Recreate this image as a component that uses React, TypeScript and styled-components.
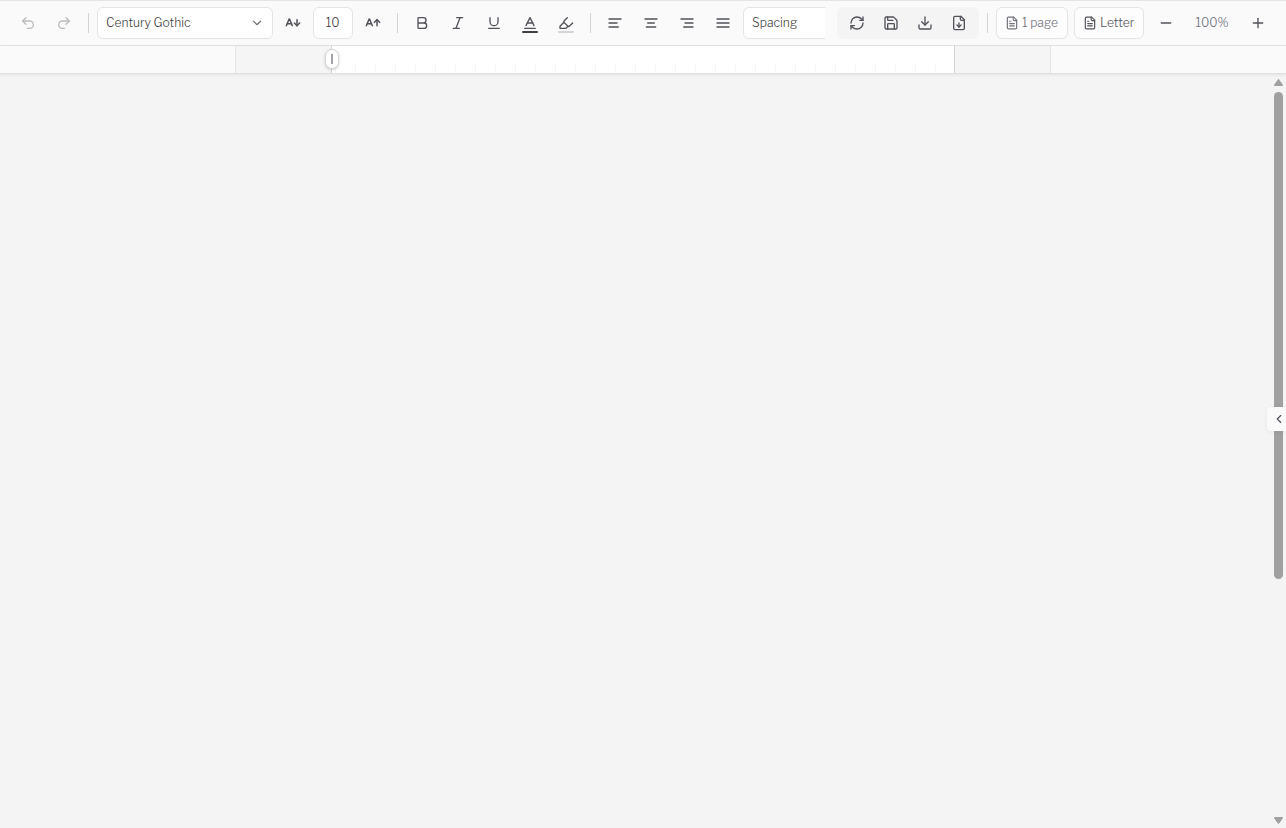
import React from 'react';
import styled, { createGlobalStyle } from 'styled-components';

const GlobalStyle = createGlobalStyle`
  * { box-sizing: border-box; }
  body { margin: 0; background: #f4f4f4; overflow: hidden; font-family: "Libre Franklin", Roboto, "Liberation Sans", sans-serif; }
`;

const Page = styled.div`
  height: 100vh;
  display: flex;
  flex-direction: column;
  background: #f4f4f4;
`;

const Toolbar = styled.header`
  display: flex;
  align-items: center;
  height: 46px;
  padding: 0 12px;
  flex: none;
  background: #fafafa;
  border-top: 1px solid #e4e4e7;
  border-bottom: 1px solid #e2e2e4;
`;

const Tools = styled.div`
  display: flex;
  align-items: center;
  gap: 4px;
  width: 813px;
  overflow: hidden;
  flex: none;
`;

const Actions = styled.div`
  display: flex;
  align-items: center;
  gap: 6px;
  margin-left: 12px;
`;

const FileGroup = styled.div`
  display: flex;
  gap: 2px;
  padding: 0 4px;
  border-radius: 6px;
  background: #f4f4f5;
`;

const Zoom = styled.div`
  display: flex;
  align-items: center;
`;

const ToolButton = styled.button<{ $dim?: boolean }>`
  display: flex;
  align-items: center;
  justify-content: center;
  position: relative;
  width: 32px;
  height: 32px;
  flex: none;
  padding: 0;
  border: 0;
  background: transparent;
  color: ${p => (p.$dim ? '#bcbcbf' : '#52525b')};
`;

const Swatch = styled.span<{ $color: string }>`
  position: absolute;
  left: 8px;
  bottom: 6px;
  width: 16px;
  height: 2px;
  border-radius: 1px;
  background: ${p => p.$color};
`;

const Separator = styled.i<{ $margin: string }>`
  width: 1px;
  height: 20px;
  flex: none;
  margin: ${p => p.$margin};
  background: #d4d4d8;
`;

const Field = styled.div<{ $width: number; $center?: boolean }>`
  display: flex;
  align-items: center;
  justify-content: ${p => (p.$center ? 'center' : 'space-between')};
  width: ${p => p.$width}px;
  height: 32px;
  flex: none;
  padding: ${p => (p.$center ? '0' : '0 8px')};
  border: 1px solid #e4e4e7;
  border-radius: 6px;
  background: #fff;
  color: #3f3f46;
  white-space: nowrap;
`;

const Chip = styled.button<{ $width: number; $dim?: boolean }>`
  display: flex;
  align-items: center;
  gap: 3px;
  width: ${p => p.$width}px;
  height: 32px;
  padding: 0 0 0 8px;
  border: 1px solid #e4e4e7;
  border-radius: 6px;
  background: #fdfdfd;
  color: ${p => (p.$dim ? '#71717a' : '#52525b')};
  white-space: nowrap;
`;

const Label = styled.span<{ $center?: boolean }>`
  padding-bottom: 2px;
  font-family: "Libre Franklin", Roboto, "Liberation Sans", sans-serif;
  font-size: 13.5px;
  font-weight: 350;
  line-height: 18px;
  transform: scaleX(0.9);
  transform-origin: ${p => (p.$center ? 'center' : 'left')};
`;

const Percent = styled(Label)`
  width: 60px;
  text-align: center;
  color: #71717a;
`;

const Muted = styled.span`
  display: flex;
  color: #71717a;
`;

const Ruler = styled.div`
  display: flex;
  justify-content: center;
  flex: none;
  height: 28px;
  background: #fafafa;
  border-bottom: 1px solid #e0e0e2;
  box-shadow: 0 1px 3px rgba(0, 0, 0, 0.07);
`;

const Paper = styled.div`
  display: flex;
  width: 816px;
  background: #fff;
`;

const Margin = styled.div<{ $side: 'left' | 'right' }>`
  width: ${p => (p.$side === 'left' ? 96 : 97)}px;
  flex: none;
  background: #f5f5f5;
  border-left: 1px solid ${p => (p.$side === 'left' ? '#e4e4e7' : '#d4d4d8')};
  border-right: ${p => (p.$side === 'right' ? '1px solid #e4e4e7' : '0')};
`;

const Scale = styled.div`
  display: flex;
  position: relative;
  flex: 1;
  align-items: flex-end;
  gap: 19px;
  padding-left: 3px;
  border-left: 1px solid #d4d4d8;
`;

const Tick = styled.i`
  width: 1px;
  height: 8px;
  flex: none;
  background: #f4f4f5;
`;

const Handle = styled.div`
  position: absolute;
  left: -7px;
  top: 3px;
  width: 14px;
  height: 20px;
  display: flex;
  align-items: center;
  justify-content: center;
  border: 1px solid #d4d4d8;
  border-radius: 7px;
  background: #fff;
  box-shadow: 0 1px 3px rgba(0, 0, 0, 0.16);
`;

const Grip = styled.i`
  width: 2px;
  height: 10px;
  background: #a1a1aa;
`;

const Workspace = styled.main`
  position: relative;
  display: flex;
  justify-content: flex-end;
  flex: 1;
`;

const Scrollbar = styled.div`
  display: flex;
  flex-direction: column;
  align-items: center;
  width: 15px;
  padding: 5px 0 3px;
`;

const Arrow = styled.svg`
  display: block;
  width: 9px;
  height: 8px;
  fill: #a0a0a0;
  flex: none;
`;

const Thumb = styled.div`
  width: 9px;
  height: 487px;
  margin: 5px 0 auto;
  border-radius: 5px;
  background: #a0a0a0;
`;

const PanelTab = styled.button`
  position: absolute;
  right: 0;
  top: 333px;
  width: 19px;
  height: 24px;
  display: flex;
  align-items: center;
  justify-content: center;
  padding: 0 0 0 4px;
  border: 0;
  border-radius: 4px 0 0 4px;
  background: #fafafa;
  color: #52525b;
  box-shadow: 0 1px 5px rgba(0, 0, 0, 0.06);
`;

const Svg = styled.svg`
  display: block;
  flex: none;
  fill: none;
  stroke: currentColor;
  stroke-linecap: round;
  stroke-linejoin: round;
`;

const page = ['M15 2H6a2 2 0 0 0-2 2v16a2 2 0 0 0 2 2h12a2 2 0 0 0 2-2V7Z', 'M14 2v4a2 2 0 0 0 2 2h4'];
const letterA = ['m2 16 4.039-9.69a.5.5 0 0 1 .923 0L11 16', 'M3.304 13h6.392'];

const icons = {
  undo: ['M9 14 4 9l5-5', 'M4 9h10.5a5.5 5.5 0 0 1 0 11H11'],
  redo: ['m15 14 5-5-5-5', 'M20 9H9.5a5.5 5.5 0 0 0 0 11H13'],
  down: ['m6 9 6 6 6-6'],
  left: ['m15 18-6-6 6-6'],
  smaller: [...letterA, 'm14 12 4 4 4-4', 'M18 16V7'],
  larger: [...letterA, 'm14 11 4-4 4 4', 'M18 16V7'],
  bold: ['M6 12h9a4 4 0 0 1 0 8H7a1 1 0 0 1-1-1V5a1 1 0 0 1 1-1h7a4 4 0 0 1 0 8'],
  italic: ['M19 4h-9', 'M14 20H5', 'M15 4 9 20'],
  underline: ['M6 4v6a6 6 0 0 0 12 0V4', 'M4 20h16'],
  color: ['M4 20h16', 'm6 16 6-12 6 12', 'M8 12h8'],
  highlight: ['m9 11-6 6v3h9l3-3', 'm22 12-4.6 4.6a2 2 0 0 1-2.8 0l-5.2-5.2a2 2 0 0 1 0-2.8L14 4'],
  alignLeft: ['M21 6H3', 'M15 12H3', 'M17 18H3'],
  alignCenter: ['M21 6H3', 'M17 12H7', 'M19 18H5'],
  alignRight: ['M21 6H3', 'M21 12H9', 'M21 18H7'],
  justify: ['M21 6H3', 'M21 12H3', 'M21 18H3'],
  refresh: ['M3 12a9 9 0 0 1 9-9 9.75 9.75 0 0 1 6.74 2.74L21 8', 'M21 3v5h-5', 'M21 12a9 9 0 0 1-9 9 9.75 9.75 0 0 1-6.74-2.74L3 16', 'M8 16H3v5'],
  save: ['M15.2 3a2 2 0 0 1 1.4.6l3.8 3.8a2 2 0 0 1 .6 1.4V19a2 2 0 0 1-2 2H5a2 2 0 0 1-2-2V5a2 2 0 0 1 2-2z', 'M17 21v-7a1 1 0 0 0-1-1H8a1 1 0 0 0-1 1v7', 'M7 3v4a1 1 0 0 0 1 1h7'],
  download: ['M21 15v4a2 2 0 0 1-2 2H5a2 2 0 0 1-2-2v-4', 'm7 10 5 5 5-5', 'M12 15V3'],
  fileDown: [...page, 'M12 18v-6', 'm9 15 3 3 3-3'],
  fileText: [...page, 'M10 9H8', 'M16 13H8', 'M16 17H8'],
  minus: ['M5 12h14'],
  plus: ['M5 12h14', 'M12 5v14'],
};
type IconName = keyof typeof icons;

function Icon({ name, size = 16, weight = 2 }: { name: IconName; size?: number; weight?: number }) {
  return (
    <Svg width={size} height={size} viewBox="0 0 24 24" strokeWidth={weight}>
      {icons[name].map(d => <path key={d} d={d} />)}
    </Svg>
  );
}

function Tool({ name, dim, swatch, weight }: { name: IconName; dim?: boolean; swatch?: string; weight?: number }) {
  return (
    <ToolButton $dim={dim} aria-label={name}>
      <Icon name={name} weight={weight} />
      {swatch && <Swatch $color={swatch} />}
    </ToolButton>
  );
}

const aligns: IconName[] = ['alignLeft', 'alignCenter', 'alignRight', 'justify'];
const fileTools: IconName[] = ['refresh', 'save', 'download', 'fileDown'];

export default function App() {
  return (
    <Page>
      <GlobalStyle />
      <Toolbar>
        <Tools>
          <Tool name="undo" dim />
          <Tool name="redo" dim />
          <Separator $margin="0 4px" />
          <Field $width={176}>
            <Label>Century Gothic</Label>
            <Muted><Icon name="down" size={14} /></Muted>
          </Field>
          <Tool name="smaller" weight={2.25} />
          <Field $width={40} $center><Label $center>10</Label></Field>
          <Tool name="larger" weight={2.25} />
          <Separator $margin="0 4px" />
          <Tool name="bold" />
          <Tool name="italic" />
          <Tool name="underline" />
          <Tool name="color" swatch="#3f3f46" />
          <Tool name="highlight" swatch="#d4d4d8" />
          <Separator $margin="0 4px" />
          {aligns.map(name => <Tool key={name} name={name} />)}
          <Field $width={110}><Label>Spacing</Label></Field>
        </Tools>
        <Actions>
          <FileGroup>
            {fileTools.map(name => <Tool key={name} name={name} />)}
          </FileGroup>
          <Separator $margin="0 2px" />
          <Chip $width={72} $dim><Icon name="fileText" size={14} /><Label>1 page</Label></Chip>
          <Chip $width={70}><Icon name="fileText" size={14} /><Label>Letter</Label></Chip>
          <Zoom>
            <Tool name="minus" />
            <Percent $center>100%</Percent>
            <Tool name="plus" />
          </Zoom>
        </Actions>
      </Toolbar>
      <Ruler>
        <Paper>
          <Margin $side="left" />
          <Scale>
            {Array.from({ length: 31 }, (_, i) => <Tick key={i} />)}
            <Handle><Grip /></Handle>
          </Scale>
          <Margin $side="right" />
        </Paper>
      </Ruler>
      <Workspace>
        <Scrollbar>
          <Arrow viewBox="0 0 9 8"><path d="M3.5.9q1-1.6 2 0l3.2 4.6q.9 1.5-.7 1.5H1q-1.6 0-.7-1.5z" /></Arrow>
          <Thumb />
          <Arrow viewBox="0 0 9 8"><path d="M3.5 6.1q1 1.6 2 0l3.2-4.6q.9-1.5-.7-1.5H1q-1.6 0-.7 1.5z" /></Arrow>
        </Scrollbar>
        <PanelTab aria-label="Open panel"><Icon name="left" size={14} /></PanelTab>
      </Workspace>
    </Page>
  );
}
